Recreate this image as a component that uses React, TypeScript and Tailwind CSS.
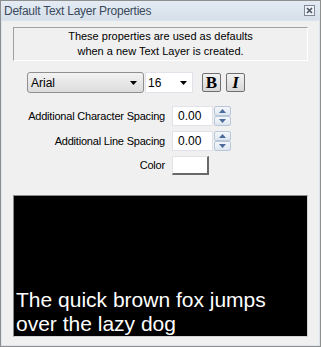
import React from "react";

const font = { fontFamily: '"Liberation Sans", Arial, sans-serif' };

function Spin() {
  return (
    <div className="flex flex-col w-[17px] h-[20px] ml-[1px]">
      <div className="flex-1 flex items-center justify-center border border-[#b9c7d8] rounded-[2px] bg-gradient-to-b from-[#f4f7fb] to-[#dde6f0]">
        <svg width="7" height="4" viewBox="0 0 7 4"><path d="M3.5 0 L7 4 L0 4 Z" fill="#4d6b9a" /></svg>
      </div>
      <div className="flex-1 flex items-center justify-center border border-[#b9c7d8] rounded-[2px] bg-gradient-to-b from-[#f4f7fb] to-[#dde6f0]">
        <svg width="7" height="4" viewBox="0 0 7 4"><path d="M0 0 L7 0 L3.5 4 Z" fill="#4d6b9a" /></svg>
      </div>
    </div>
  );
}

function Arrow() {
  return (
    <svg width="7" height="4" viewBox="0 0 7 4"><path d="M0 0 L7 0 L3.5 4 Z" fill="#000" /></svg>
  );
}

export default function App() {
  return (
    <div
      className="w-[321px] h-[347px] border border-[#8e8f8f] bg-[#f0f0f0] flex flex-col text-black overflow-hidden"
      style={font}
    >
      {/* title bar */}
      <div className="h-[20px] flex items-center justify-between pl-[3px] pr-[5px] bg-gradient-to-b from-[#e4ebf3] to-[#d6e0ea] border-b border-[#dde4ec]">
        <span className="text-[12px] tracking-[-0.25px] text-[#3b4a5c]">Default Text Layer Properties</span>
        <div className="w-[11px] h-[11px] border border-[#7d8899] bg-[#eef2f6] flex items-center justify-center">
          <svg width="7" height="7" viewBox="0 0 7 7">
            <path d="M1 1 L6 6 M6 1 L1 6" stroke="#4a5564" strokeWidth="1.6" />
          </svg>
        </div>
      </div>

      <div className="flex-1 flex flex-col px-[11px] border-l border-r border-b border-[#dde3ea]">
        {/* info box */}
        <div className="mt-[6px] h-[34px] border-t border-l border-[#a0a0a0] border-r border-b border-r-white border-b-white flex flex-col items-center justify-center text-[11px] leading-[15px]">
          <span>These properties are used as defaults</span>
          <span>when a new Text Layer is created.</span>
        </div>

        {/* font row */}
        <div className="mt-[11px] flex items-center pl-[14px]">
          <div className="w-[117px] h-[21px] rounded-[3px] border border-[#8e8f8f] bg-gradient-to-b from-[#f3f3f3] to-[#dcdcdc] flex items-center justify-between pl-[3px] pr-[6px] text-[12px]">
            <span>Arial</span>
            <Arrow />
          </div>
          <div className="ml-[1px] w-[48px] h-[21px] border border-[#e2e3ea] bg-white flex items-center justify-between pl-[2px] pr-[5px] text-[12px]">
            <span>16</span>
            <Arrow />
          </div>
          <div className="ml-[9px] w-[19px] h-[19px] rounded-[2px] border border-[#707070] bg-gradient-to-b from-[#f2f2f2] to-[#d8d8d8] flex items-center justify-center">
            <span className="text-[17px] font-bold leading-none" style={{ fontFamily: '"Liberation Serif", serif' }}>B</span>
          </div>
          <div className="ml-[5px] w-[19px] h-[19px] rounded-[2px] border border-[#707070] bg-gradient-to-b from-[#f2f2f2] to-[#d8d8d8] flex items-center justify-center">
            <span className="text-[17px] font-bold italic leading-none" style={{ fontFamily: '"Liberation Serif", serif' }}>I</span>
          </div>
        </div>

        {/* spacing rows */}
        <div className="mt-[13px] grid grid-cols-[152px_auto] gap-x-[7px] gap-y-[5px] items-center text-[11px] tracking-[-0.2px]">
          <span className="text-right">Additional Character Spacing</span>
          <div className="flex items-center tracking-normal">
            <div className="w-[41px] h-[20px] border border-[#e2e3ea] bg-white flex items-center pl-[5px] text-[12px]">0.00</div>
            <Spin />
          </div>
          <span className="text-right">Additional Line Spacing</span>
          <div className="flex items-center tracking-normal">
            <div className="w-[41px] h-[20px] border border-[#e2e3ea] bg-white flex items-center pl-[5px] text-[12px]">0.00</div>
            <Spin />
          </div>
          <span className="text-right">Color</span>
          <div className="w-[37px] h-[19px] border-t border-l border-[#e3e3e3] border-r-2 border-b-2 border-r-[#696969] border-b-[#696969] bg-white" />
        </div>

        {/* preview */}
        <div className="mt-[20px] h-[142px] border border-[#8c8c8c] border-r-[#d4d4d4] border-b-[#d4d4d4] bg-black flex flex-col justify-end overflow-hidden pl-[2px]">
          <div className="text-white text-[21px] leading-[24px]" style={font}>
            The quick brown fox jumps
            <br />
            over the lazy dog
          </div>
        </div>
      </div>
    </div>
  );
}
